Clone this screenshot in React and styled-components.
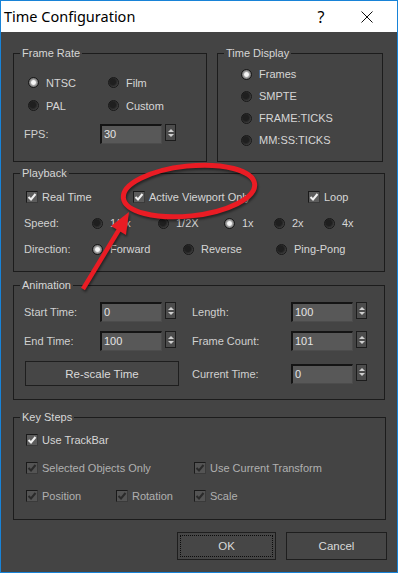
import React from 'react';
import styled, { createGlobalStyle } from 'styled-components';

const GlobalStyle = createGlobalStyle`
  html, body {
    margin: 0;
    padding: 0;
    background: #fff;
  }
  body {
    font-family: "Liberation Sans", Arial, sans-serif;
  }
`;

const Window = styled.div`
  position: relative;
  width: 398px;
  height: 573px;
  box-sizing: border-box;
  border: 1px solid #1883d7;
  background: #444444;
  display: flex;
  flex-direction: column;
  overflow: hidden;
`;

const TitleBar = styled.div`
  height: 31px;
  flex: none;
  background: #fff;
  display: flex;
  align-items: center;
  padding: 0 7px 0 3px;
  font-family: "Noto Sans", sans-serif;
  font-size: 14.5px;
  color: #000;
`;

const Title = styled.div`
  flex: 1;
  padding-bottom: 2px;
`;

const TitleButton = styled.div`
  width: 46px;
  height: 31px;
  display: flex;
  align-items: center;
  justify-content: center;
  font-size: 16px;
`;

const Body = styled.div`
  padding: 21px 0 0 12px;
  display: flex;
  flex-direction: column;
  font-size: 11px;
  color: #d6d6d6;
`;

const TopRow = styled.div`
  display: flex;
  gap: 10px;
`;

const Group = styled.div`
  position: relative;
  box-sizing: border-box;
  border: 1px solid #1c1c1c;
  width: ${p => p.$w}px;
  height: ${p => p.$h}px;
  margin-top: ${p => p.$mt || 0}px;
  padding: ${p => p.$pad};
`;

const Legend = styled.span`
  position: absolute;
  top: -7px;
  left: 6px;
  padding: 0 2px;
  background: #444444;
  line-height: 13px;
  color: #d6d6d6;
`;

const RadioGrid = styled.div`
  display: grid;
  grid-template-columns: ${p => p.$cols};
  grid-auto-rows: ${p => p.$row}px;
  align-items: center;
  padding-left: ${p => p.$indent || 0}px;
`;

const RadioWrap = styled.div`
  display: inline-flex;
  align-items: center;
  gap: 7px;
  width: ${p => (p.$w ? `${p.$w}px` : 'auto')};
  white-space: nowrap;
`;

const Dot = styled.span`
  width: 11px;
  height: 11px;
  box-sizing: border-box;
  border-radius: 50%;
  border: 1px solid #181818;
  background: ${p =>
    p.$on
      ? 'radial-gradient(circle, #f6f6f6 0 30%, #a8a8a8 45%, #545454 85%)'
      : 'radial-gradient(circle at 42% 42%, #1f1f1f 0 38%, #2c2c2c 55%, #5c5c5c 95%)'};
  flex: none;
`;

const Radio = ({ label, on, w }) => (
  <RadioWrap $w={w}>
    <Dot $on={on} />
    <span>{label}</span>
  </RadioWrap>
);

const CheckWrap = styled.div`
  display: inline-flex;
  align-items: center;
  gap: 4px;
  white-space: nowrap;
  color: ${p => (p.$dim ? '#b0b0b0' : '#d6d6d6')};
  grid-column: ${p => p.$span || 'auto'};
`;

const Box = styled.span`
  width: 12px;
  height: 12px;
  box-sizing: border-box;
  border: 1px solid #1a1a1a;
  border-right-color: #3a3a3a;
  border-bottom-color: #3a3a3a;
  background: ${p => (p.$dim ? '#545454' : '#5c5c5c')};
  display: flex;
  align-items: center;
  justify-content: center;
  flex: none;
`;

const Check = ({ label, dim, span }) => (
  <CheckWrap $dim={dim} $span={span}>
    <Box $dim={dim}>
      <svg width="10" height="10" viewBox="0 0 10 10">
        <polyline
          points="1.5,5 4,7.5 8.5,2"
          fill="none"
          stroke={dim ? '#2a2a2a' : '#f2f2f2'}
          strokeWidth="2"
        />
      </svg>
    </Box>
    <span>{label}</span>
  </CheckWrap>
);

const Row = styled.div`
  display: flex;
  align-items: center;
  height: ${p => p.$h}px;
  margin-top: ${p => p.$mt || 0}px;
`;

const Label = styled.span`
  width: ${p => p.$w}px;
  flex: none;
  color: #d0d0d0;
`;

const CheckGrid = styled.div`
  display: grid;
  grid-template-columns: ${p => p.$cols};
  grid-auto-rows: ${p => p.$row}px;
  align-items: center;
  padding-left: ${p => p.$indent || 0}px;
`;

const Field = styled.div`
  display: flex;
  align-items: flex-start;
  gap: 3px;
`;

const Input = styled.div`
  width: 62px;
  height: 20px;
  box-sizing: border-box;
  background: #585858;
  border-top: 2px solid #141414;
  border-left: 2px solid #141414;
  border-right: 1px solid #4c4c4c;
  border-bottom: 1px solid #4c4c4c;
  color: #e4e4e4;
  padding: 1px 0 0 2px;
  line-height: 14px;
`;

const Spinner = styled.div`
  width: 11px;
  height: 17px;
  box-sizing: border-box;
  border: 1px solid #1c1c1c;
  background: #4c4c4c;
  display: flex;
  flex-direction: column;
  align-items: center;
  justify-content: center;
  gap: 2px;
`;

const Tri = styled.span`
  width: 0;
  height: 0;
  border-left: 3px solid transparent;
  border-right: 3px solid transparent;
  ${p => (p.$down ? 'border-top: 3px solid #d0d0d0;' : 'border-bottom: 3px solid #d0d0d0;')}
`;

const SpinField = ({ value }) => (
  <Field>
    <Input>{value}</Input>
    <Spinner>
      <Tri />
      <Tri $down />
    </Spinner>
  </Field>
);

const AnimGrid = styled.div`
  display: grid;
  grid-template-columns: 168px auto;
`;

const FieldCell = styled.div`
  display: flex;
  align-items: center;
`;

const PushButton = styled.div`
  position: relative;
  box-sizing: border-box;
  width: ${p => p.$w}px;
  height: ${p => p.$h}px;
  margin-left: ${p => p.$ml || 0}px;
  border: 1px solid #1e1e1e;
  background: #464646;
  color: #dadada;
  display: flex;
  align-items: center;
  justify-content: center;
  font-size: 11.5px;
  ${p =>
    p.$focus &&
    `&::after {
      content: '';
      position: absolute;
      inset: 2px;
      border: 1px dotted #0c0c0c;
    }`}
`;

const ButtonBar = styled.div`
  display: flex;
  justify-content: flex-end;
  gap: 10px;
  width: 374px;
  margin-top: 12px;
`;

const Overlay = styled.svg`
  position: absolute;
  top: -1px;
  left: -1px;
  pointer-events: none;
  filter: drop-shadow(1px 2px 1px rgba(0, 0, 0, 0.45));
`;

export default function App() {
  return (
    <>
      <GlobalStyle />
      <Window>
        <TitleBar>
          <Title>Time Configuration</Title>
          <TitleButton>?</TitleButton>
          <TitleButton>
            <svg width="12" height="12" viewBox="0 0 12 12">
              <path d="M0.5 0.5 L11.5 11.5 M11.5 0.5 L0.5 11.5" stroke="#111" strokeWidth="1" />
            </svg>
          </TitleButton>
        </TitleBar>

        <Body>
          <TopRow>
            <Group $w={194} $h={109} $pad="17px 0 0 10px">
              <Legend>Frame Rate</Legend>
              <RadioGrid $cols="80px auto" $row={23} $indent={4}>
                <Radio label="NTSC" on />
                <Radio label="Film" />
                <Radio label="PAL" />
                <Radio label="Custom" />
              </RadioGrid>
              <Row $h={20} $mt={7}>
                <Label $w={76}>FPS:</Label>
                <SpinField value="30" />
              </Row>
            </Group>

            <Group $w={166} $h={109} $pad="9px 0 0 23px">
              <Legend>Time Display</Legend>
              <RadioGrid $cols="auto" $row={22}>
                <Radio label="Frames" on />
                <Radio label="SMPTE" />
                <Radio label="FRAME:TICKS" />
                <Radio label="MM:SS:TICKS" />
              </RadioGrid>
            </Group>
          </TopRow>

          <Group $w={372} $h={99} $mt={11} $pad="10px 0 0 10px">
            <Legend>Playback</Legend>
            <CheckGrid $cols="107px 175px auto" $row={26} $indent={2}>
              <Check label="Real Time" />
              <Check label="Active Viewport Only" />
              <Check label="Loop" />
            </CheckGrid>
            <Row $h={26}>
              <Label $w={68}>Speed:</Label>
              <Radio label="1/4x" w={66} />
              <Radio label="1/2X" w={66} />
              <Radio label="1x" w={50} on />
              <Radio label="2x" w={50} />
              <Radio label="4x" />
            </Row>
            <Row $h={26}>
              <Label $w={68}>Direction:</Label>
              <Radio label="Forward" w={91} on />
              <Radio label="Reverse" w={93} />
              <Radio label="Ping-Pong" />
            </Row>
          </Group>

          <Group $w={372} $h={115} $mt={13} $pad="16px 0 0 10px">
            <Legend>Animation</Legend>
            <AnimGrid>
              <FieldCell>
                <Label $w={76}>Start Time:</Label>
                <SpinField value="0" />
              </FieldCell>
              <FieldCell>
                <Label $w={99}>Length:</Label>
                <SpinField value="100" />
              </FieldCell>
            </AnimGrid>
            <Row $h={20} $mt={9}>
              <AnimGrid>
                <FieldCell>
                  <Label $w={76}>End Time:</Label>
                  <SpinField value="100" />
                </FieldCell>
                <FieldCell>
                  <Label $w={99}>Frame Count:</Label>
                  <SpinField value="101" />
                </FieldCell>
              </AnimGrid>
            </Row>
            <Row $h={25} $mt={10}>
              <AnimGrid>
                <FieldCell>
                  <PushButton $w={154} $h={25} $ml={1}>Re-scale Time</PushButton>
                </FieldCell>
                <FieldCell>
                  <Label $w={99}>Current Time:</Label>
                  <SpinField value="0" />
                </FieldCell>
              </AnimGrid>
            </Row>
          </Group>

          <Group $w={373} $h={103} $mt={17} $pad="8px 0 0 12px">
            <Legend>Key Steps</Legend>
            <CheckGrid $cols="90px 78px auto" $row={28}>
              <Check label="Use TrackBar" span="1 / 4" />
              <Check label="Selected Objects Only" span="1 / 3" dim />
              <Check label="Use Current Transform" dim />
              <Check label="Position" dim />
              <Check label="Rotation" dim />
              <Check label="Scale" dim />
            </CheckGrid>
          </Group>

          <ButtonBar>
            <PushButton $w={99} $h={28} $focus>OK</PushButton>
            <PushButton $w={101} $h={28}>Cancel</PushButton>
          </ButtonBar>
        </Body>

        <Overlay width="398" height="573" viewBox="0 0 398 573">
          <ellipse
            cx="189"
            cy="191"
            rx="66"
            ry="25"
            transform="rotate(-6 189 191)"
            fill="none"
            stroke="#ea1c24"
            strokeWidth="5"
          />
          <line x1="83" y1="289" x2="120" y2="228" stroke="#ea1c24" strokeWidth="4.5" />
          <polygon points="129,212 126,235 111,226" fill="#ea1c24" />
        </Overlay>
      </Window>
    </>
  );
}
